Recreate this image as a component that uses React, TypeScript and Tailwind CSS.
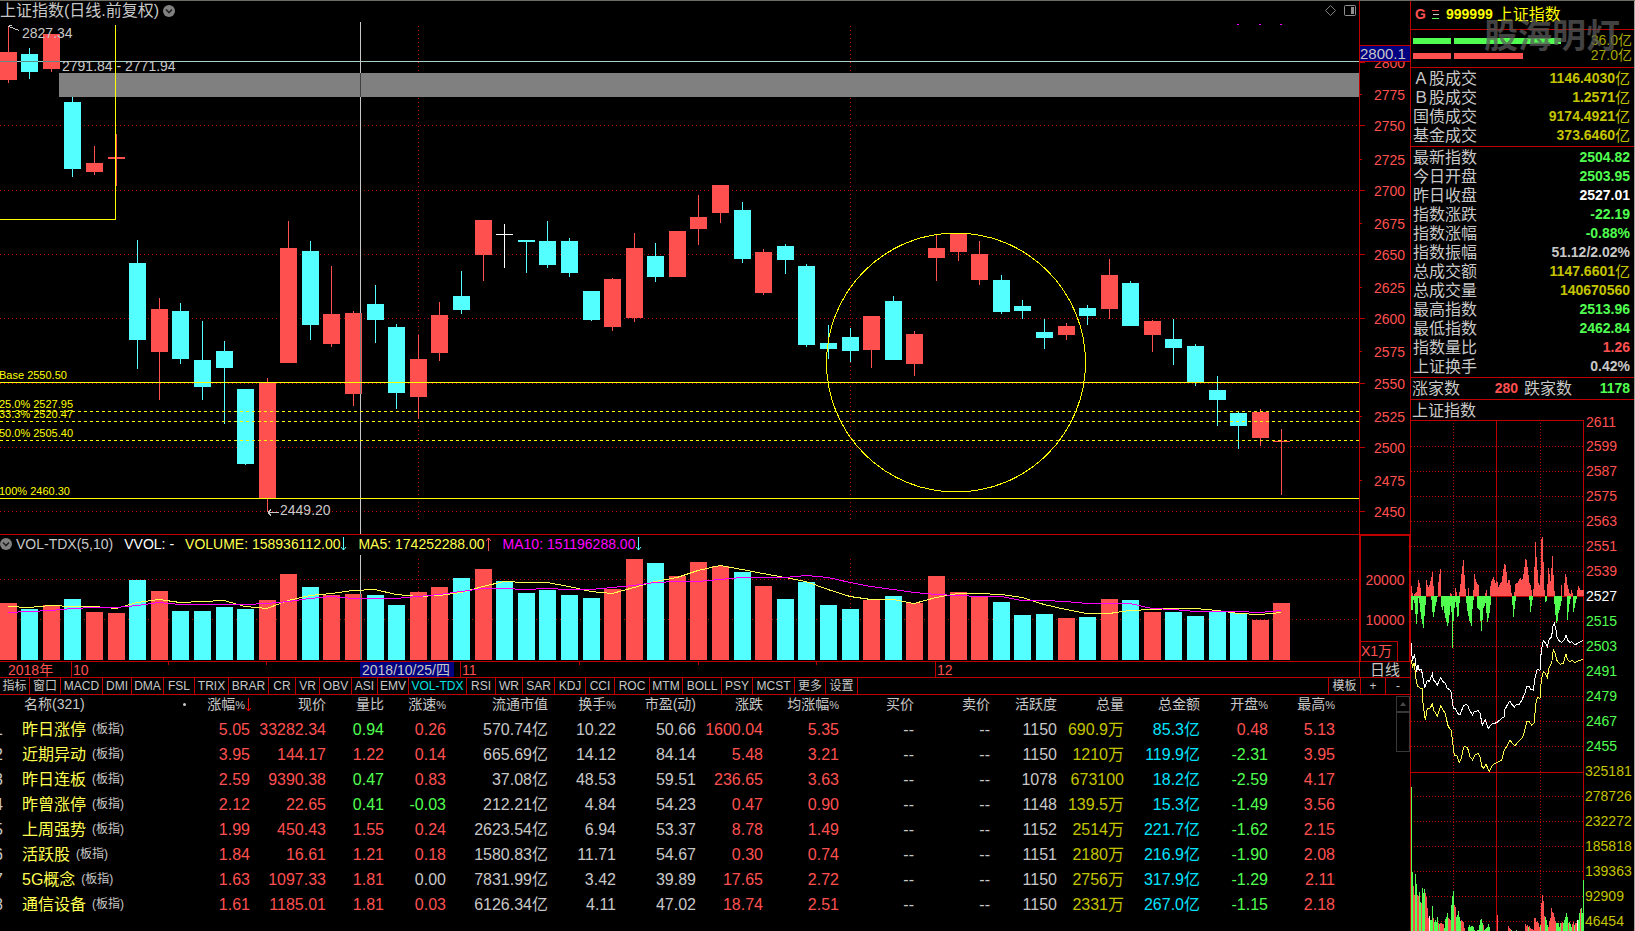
import React from "react";

type Tone = "R" | "C" | "W";
// tone, body top, body bottom, high, low, volume bar top
type Bar = [Tone, number, number, number, number, number];

const bars: Bar[] = [
  ["R", 52, 80, 27, 83, 603], ["C", 54, 72, 48, 79, 609], ["R", 34, 69, 34, 72, 605], ["C", 102, 169, 97, 177, 599],
  ["R", 163, 172, 146, 175, 612], ["R", 157, 159, 134, 186, 613], ["C", 263, 340, 240, 369, 580], ["R", 309, 352, 298, 400, 591],
  ["C", 311, 359, 303, 364, 611], ["C", 360, 387, 321, 400, 611], ["C", 351, 368, 341, 424, 607], ["C", 389, 464, 389, 465, 609],
  ["R", 382, 498, 378, 512, 600], ["R", 248, 363, 221, 363, 574], ["C", 251, 325, 241, 340, 587], ["R", 314, 344, 266, 347, 595],
  ["R", 313, 394, 311, 406, 594], ["C", 304, 320, 285, 343, 595], ["C", 327, 393, 324, 409, 605], ["R", 359, 397, 335, 419, 592],
  ["R", 315, 353, 302, 361, 587], ["C", 296, 310, 271, 314, 578], ["R", 220, 255, 220, 281, 569], ["W", 234, 235, 224, 268, 581],
  ["C", 240, 242, 240, 273, 593], ["C", 241, 265, 221, 268, 590], ["C", 241, 273, 238, 277, 595], ["C", 291, 320, 291, 321, 598],
  ["R", 279, 327, 278, 331, 589], ["R", 248, 318, 233, 322, 559], ["C", 256, 277, 243, 282, 563], ["R", 231, 277, 231, 277, 576],
  ["R", 217, 229, 195, 245, 562], ["R", 185, 213, 185, 223, 566], ["C", 210, 259, 202, 263, 572], ["R", 252, 293, 249, 295, 586],
  ["C", 246, 260, 244, 274, 599], ["C", 266, 345, 264, 347, 582], ["C", 343, 349, 325, 359, 605], ["C", 337, 351, 328, 362, 609],
  ["R", 316, 350, 316, 368, 600], ["C", 301, 360, 296, 360, 596], ["R", 334, 364, 331, 376, 603], ["R", 248, 258, 234, 281, 576],
  ["R", 233, 252, 233, 261, 592], ["R", 254, 280, 241, 285, 596], ["C", 280, 312, 275, 314, 602], ["C", 306, 311, 300, 319, 615],
  ["C", 332, 338, 319, 349, 614], ["R", 326, 335, 323, 340, 618], ["C", 308, 316, 305, 325, 617], ["R", 275, 309, 259, 319, 599],
  ["C", 283, 326, 281, 326, 600], ["R", 321, 335, 320, 352, 612], ["C", 339, 348, 319, 365, 612], ["C", 346, 382, 344, 386, 616],
  ["C", 390, 400, 376, 426, 612], ["C", 413, 426, 412, 449, 613], ["R", 412, 438, 409, 446, 620], ["R", 441, 442, 429, 495, 603],
];
const fills: Record<Tone, string> = { R: "#ff5050", C: "#54ffff", W: "#ffffff" };
const cx = (n: number) => Math.round(7.6 + 21.59 * n);

const ma5 = [606, 607, 605, 606, 606, 608, 602, 599, 602, 601, 600, 606, 608, 600, 595, 593, 590, 589, 594, 596, 595, 592, 586, 581, 582, 582, 586, 591, 593, 587, 581, 577, 570, 565, 569, 573, 577, 581, 589, 596, 599, 599, 603, 597, 593, 593, 594, 597, 604, 609, 613, 613, 610, 609, 608, 608, 610, 613, 614, 612];
const ma10 = [612, 611, 610, 608, 607, 607, 605, 602, 604, 604, 604, 604, 603, 601, 598, 596, 598, 598, 598, 596, 594, 591, 588, 588, 589, 588, 589, 589, 587, 585, 582, 581, 581, 579, 577, 577, 577, 575, 577, 582, 586, 589, 592, 594, 595, 596, 596, 600, 600, 601, 603, 603, 603, 608, 609, 611, 611, 611, 612, 610];
const maPath = (v: number[]) => v.map((y, n) => `${cx(n)},${y + 0.5}`).join(" ");

const priceLabels: [string, number][] = [
  ["2800", 62], ["2775", 94], ["2750", 125], ["2725", 159], ["2700", 190], ["2675", 223], ["2650", 254], ["2625", 287],
  ["2600", 318], ["2575", 351], ["2550", 383], ["2525", 416], ["2500", 447], ["2475", 480], ["2450", 511],
];
const tabs: [string, string][] = [
  ["指标", "w-[30px]"], ["窗口", "w-[31px]"], ["MACD", "w-[42px]"], ["DMI", "w-[29px]"], ["DMA", "w-[32px]"], ["FSL", "w-[31px]"],
  ["TRIX", "w-[34px]"], ["BRAR", "w-[40px]"], ["CR", "w-[27px]"], ["VR", "w-[24px]"], ["OBV", "w-[32px]"], ["ASI", "w-[26px]"],
  ["EMV", "w-[31px]"], ["VOL-TDX", "w-[58px]"], ["RSI", "w-[29px]"], ["WR", "w-[27px]"], ["SAR", "w-[32px]"], ["KDJ", "w-[31px]"],
  ["CCI", "w-[29px]"], ["ROC", "w-[35px]"], ["MTM", "w-[33px]"], ["BOLL", "w-[39px]"], ["PSY", "w-[31px]"], ["MCST", "w-[42px]"],
  ["更多", "w-[31px]"], ["设置", "w-[32px]"],
];

const RED = "text-[#ff5050]";
const GREEN = "text-[#50ff50]";
const GREY = "text-[#c8c8c8]";
const GOLD = "text-[#c4c400]";
const AQUA = "text-[#00e4ff]";

const columns: [string, string][] = [
  ["现价", "w-[76px]"], ["量比", "w-[58px]"], ["涨速%", "w-[62px]"], ["流通市值", "w-[102px]"], ["换手%", "w-[68px]"],
  ["市盈(动)", "w-[80px]"], ["涨跌", "w-[67px]"], ["均涨幅%", "w-[76px]"], ["买价", "w-[75px]"], ["卖价", "w-[76px]"],
  ["活跃度", "w-[67px]"], ["总量", "w-[67px]"], ["总金额", "w-[76px]"], ["开盘%", "w-[68px]"], ["最高%", "w-[67px]"],
];
const rows: string[][] = [
  ["昨日涨停", "5.05", "33282.34", "0.94", "0.26", "570.74亿", "10.22", "50.66", "1600.04", "5.35", "--", "--", "1150", "690.9万", "85.3亿", "0.48", "5.13"],
  ["近期异动", "3.95", "144.17", "1.22", "0.14", "665.69亿", "14.12", "84.14", "5.48", "3.21", "--", "--", "1150", "1210万", "119.9亿", "-2.31", "3.95"],
  ["昨日连板", "2.59", "9390.38", "0.47", "0.83", "37.08亿", "48.53", "59.51", "236.65", "3.63", "--", "--", "1078", "673100", "18.2亿", "-2.59", "4.17"],
  ["昨曾涨停", "2.12", "22.65", "0.41", "-0.03", "212.21亿", "4.84", "54.23", "0.47", "0.90", "--", "--", "1148", "139.5万", "15.3亿", "-1.49", "3.56"],
  ["上周强势", "1.99", "450.43", "1.55", "0.24", "2623.54亿", "6.94", "53.37", "8.78", "1.49", "--", "--", "1152", "2514万", "221.7亿", "-1.62", "2.15"],
  ["活跃股", "1.84", "16.61", "1.21", "0.18", "1580.83亿", "11.71", "54.67", "0.30", "0.74", "--", "--", "1151", "2180万", "216.9亿", "-1.90", "2.08"],
  ["5G概念", "1.63", "1097.33", "1.81", "0.00", "7831.99亿", "3.42", "39.89", "17.65", "2.72", "--", "--", "1150", "2756万", "317.9亿", "-1.29", "2.11"],
  ["通信设备", "1.61", "1185.01", "1.81", "0.03", "6126.34亿", "4.11", "47.02", "18.74", "2.51", "--", "--", "1150", "2331万", "267.0亿", "-1.15", "2.18"],
];
function cellTone(i: number, v: string) {
  if (i === 3) return Number(v) < 1 ? GREEN : RED;
  if (i === 4 || i === 15) return v === "0.00" ? GREY : v.startsWith("-") ? GREEN : RED;
  if ([5, 6, 7, 10, 11, 12].includes(i)) return GREY;
  if (i === 13) return GOLD;
  if (i === 14) return AQUA;
  return RED;
}

const turnover: [string, string][] = [["Ａ股成交", "1146.4030"], ["Ｂ股成交", "1.2571"], ["国债成交", "9174.4921"], ["基金成交", "373.6460"]];
const stats: [string, string, string, string?][] = [
  ["最新指数", "2504.82", GREEN], ["今日开盘", "2503.95", GREEN], ["昨日收盘", "2527.01", "text-white"], ["指数涨跌", "-22.19", GREEN],
  ["指数涨幅", "-0.88%", GREEN], ["指数振幅", "51.12/2.02%", GREY], ["总成交额", "1147.6601", GOLD, "亿"], ["总成交量", "140670560", GOLD],
  ["最高指数", "2513.96", GREEN], ["最低指数", "2462.84", GREEN], ["指数量比", "1.26", RED], ["上证换手", "0.42%", GREY],
];

// Intraday profiles, in thirds of a pixel
const up: [number, number][] = [[34, 10], [38, 0], [44, 2], [50, 4], [55, 16], [60, 11], [64, 0], [76, 0], [78, 18], [84, 8], [90, 13], [97, 24], [102, 0], [112, 0], [116, 18], [121, 27], [124, 0], [149, 0], [152, 5], [155, 0], [163, 0], [166, 8], [172, 0], [176, 0], [180, 8], [185, 26], [190, 36], [195, 11], [198, 0], [202, 0], [205, 8], [208, 0], [219, 0], [223, 22], [228, 14], [235, 11], [238, 0], [253, 0], [259, 6], [262, 0], [268, 0], [270, 9], [275, 16], [280, 19], [286, 13], [291, 16], [295, 9], [300, 12], [305, 15], [312, 32], [317, 31], [322, 13], [327, 18], [332, 9], [335, 0], [342, 0], [345, 12], [352, 13], [360, 18], [366, 15], [372, 26], [377, 40], [382, 29], [388, 13], [393, 9], [396, 0], [399, 0], [401, 13], [406, 54], [410, 34], [415, 13], [420, 9], [424, 57], [428, 60], [432, 8], [436, 0], [440, 0], [442, 12], [446, 33], [450, 11], [457, 40], [460, 21], [464, 0], [481, 0], [484, 11], [487, 0], [490, 0], [493, 13], [497, 25], [502, 11], [507, 4], [510, 0], [515, 8], [518, 0], [530, 0], [534, 11], [540, 6], [550, 6]];
const down: [number, number][] = [[34, 14], [37, 14], [41, 0], [45, 14], [50, 32], [54, 4], [56, 0], [60, 14], [66, 27], [70, 32], [75, 12], [79, 0], [93, 0], [97, 16], [100, 21], [106, 10], [112, 1], [122, 0], [125, 16], [130, 10], [135, 21], [140, 27], [143, 32], [148, 19], [153, 4], [157, 52], [161, 16], [167, 4], [172, 21], [176, 20], [179, 0], [197, 0], [200, 11], [207, 24], [214, 30], [218, 7], [222, 0], [230, 0], [232, 12], [238, 14], [244, 35], [250, 12], [256, 7], [262, 26], [268, 17], [274, 0], [334, 0], [337, 9], [340, 21], [345, 7], [348, 0], [387, 0], [391, 16], [397, 4], [400, 0], [434, 0], [437, 9], [441, 0], [461, 0], [465, 16], [470, 30], [475, 17], [482, 9], [486, 0], [499, 0], [502, 24], [507, 10], [513, 0], [517, 0], [520, 16], [526, 7], [531, 0]];
type Vol = [number, number, string];
const G = "#50ff50", R = "#ff5050", W = "#ffffff";
const vols: Vol[] = [[34, 110, G], [37, 365, G], [40, 408, R], [43, 435, R], [46, 372, G], [49, 402, G], [52, 435, R], [55, 437, R], [58, 425, G], [61, 455, G], [64, 460, R], [67, 413, G], [70, 428, G], [73, 417, G], [76, 430, R], [79, 440, R], [82, 475, R], [85, 505, R], [88, 498, W], [91, 510, G], [94, 510, G], [97, 468, G], [100, 505, R], [103, 515, G], [106, 510, G], [109, 515, G], [112, 500, G], [115, 518, R], [118, 522, G], [121, 520, R], [124, 520, R], [130, 522, R], [133, 535, G], [136, 508, G], [139, 500, G], [142, 490, G], [145, 503, R], [148, 508, R], [151, 510, R], [154, 465, G], [157, 438, G], [160, 423, G], [163, 465, R], [166, 470, R], [169, 502, G], [172, 495, G], [175, 483, G], [178, 500, G], [181, 512, G], [184, 510, R], [190, 515, R], [193, 535, R], [196, 543, G], [202, 543, G], [205, 530, G], [208, 525, G], [211, 530, G], [214, 528, G], [220, 530, G], [224, 543, G], [235, 540, G], [241, 510, G], [244, 507, G], [247, 520, G], [250, 525, R], [253, 540, G], [262, 530, G], [265, 522, G], [268, 530, G], [271, 543, R], [289, 543, R], [292, 495, R], [295, 543, R], [322, 543, R], [325, 527, R], [331, 538, R], [340, 543, G], [350, 540, G], [355, 543, R], [373, 543, R], [376, 522, R], [379, 528, R], [382, 525, R], [385, 530, G], [388, 527, R], [391, 535, R], [400, 540, R], [403, 505, R], [406, 503, R], [409, 515, R], [412, 512, R], [415, 520, R], [418, 530, R], [421, 525, G], [424, 460, R], [427, 435, R], [430, 452, R], [433, 498, R], [436, 500, G], [439, 510, G], [442, 525, G], [445, 530, R], [448, 512, R], [451, 505, R], [454, 473, R], [457, 485, R], [460, 490, R], [463, 500, R], [466, 512, R], [469, 520, G], [475, 520, G], [478, 530, G], [481, 520, G], [487, 515, R], [490, 520, G], [496, 500, G], [499, 488, G], [502, 500, G], [505, 520, R], [508, 516, G], [514, 530, G], [520, 516, R], [523, 525, G], [526, 518, R], [529, 520, R], [532, 510, W], [535, 510, G], [538, 490, G], [541, 478, R], [544, 475, G], [547, 490, G], [550, 390, G]];

function sample(points: [number, number][]) {
  const out: { x: number; h: number }[] = [];
  for (let i = 0; i < 173; i++) {
    const p = 34 + i * 3;
    const k = points.findIndex(([x]) => x >= p);
    if (k < 0) continue;
    const [x1, y1] = points[k];
    const [x0, y0] = k > 0 ? points[k - 1] : points[k];
    const h = x1 === x0 ? y1 : y0 + ((y1 - y0) * (p - x0)) / (x1 - x0);
    if (h >= 1) out.push({ x: i, h: Math.round(h) });
  }
  return out;
}
function sampleVols() {
  const out: { x: number; top: number; c: string }[] = [];
  for (let i = 0; i < 173; i++) {
    const p = 34 + i * 3;
    const k = vols.findIndex(([x]) => x >= p);
    if (k < 0) continue;
    const [x1, y1, c] = vols[k];
    const [x0, y0] = k > 0 ? vols[k - 1] : vols[k];
    const y = x1 === x0 ? y1 : y0 + ((y1 - y0) * (p - x0)) / (x1 - x0);
    if (y < 541) out.push({ x: i, top: Math.round(y / 3), c });
  }
  return out;
}
const white: [number, number][] = [[33, 430], [37, 480], [44, 465], [50, 515], [54, 495], [58, 512], [63, 508], [67, 520], [74, 565], [82, 540], [88, 545], [97, 522], [100, 540], [106, 545], [112, 555], [122, 533], [128, 545], [135, 548], [142, 565], [150, 570], [153, 575], [160, 625], [166, 625], [173, 640], [180, 645], [190, 618], [198, 613], [204, 617], [208, 630], [218, 645], [222, 635], [235, 632], [240, 640], [247, 675], [256, 660], [265, 685], [275, 672], [290, 668], [305, 655], [313, 650], [315, 628], [325, 610], [330, 603], [335, 612], [343, 622], [350, 612], [358, 612], [366, 600], [375, 578], [380, 560], [386, 558], [392, 568], [400, 570], [405, 535], [412, 508], [420, 512], [424, 450], [430, 422], [436, 428], [442, 440], [448, 418], [455, 410], [458, 380], [463, 370], [468, 390], [470, 410], [478, 423], [485, 427], [493, 420], [498, 405], [503, 420], [510, 427], [515, 425], [525, 435], [535, 428], [550, 421]];
const yellow: [number, number][] = [[33, 480], [38, 500], [43, 488], [47, 530], [52, 558], [62, 565], [66, 565], [70, 620], [76, 660], [82, 625], [90, 625], [97, 612], [102, 632], [112, 648], [122, 618], [128, 628], [135, 640], [145, 680], [153, 690], [160, 740], [163, 765], [170, 765], [178, 788], [184, 775], [190, 745], [195, 738], [203, 745], [210, 770], [218, 780], [225, 765], [235, 760], [240, 770], [246, 800], [252, 805], [258, 793], [268, 815], [278, 795], [292, 787], [305, 780], [313, 750], [320, 740], [330, 720], [337, 730], [345, 738], [352, 728], [366, 715], [372, 700], [380, 665], [388, 665], [395, 675], [402, 670], [408, 610], [412, 593], [420, 595], [424, 540], [430, 515], [436, 520], [442, 532], [448, 500], [455, 490], [460, 448], [466, 460], [470, 480], [480, 493], [490, 490], [498, 462], [503, 480], [510, 485], [516, 480], [525, 488], [535, 483], [550, 478]];
const intraday = (pts: [number, number][]) => pts.map(([x, y]) => `${((x - 33) / 3).toFixed(1)},${(y / 3 + 80).toFixed(1)}`).join(" ");

const miniLabels: [string, string][] = [
  ["2611", R], ["2599", R], ["2587", R], ["2575", R], ["2563", R], ["2551", R], ["2539", R], ["2527", W], ["2515", G], ["2503", G],
  ["2491", G], ["2479", G], ["2467", G], ["2455", G], ["325181", "#c4c400"], ["278726", "#c4c400"], ["232272", "#c4c400"],
  ["185818", "#c4c400"], ["139363", "#c4c400"], ["92909", "#c4c400"], ["46454", "#c4c400"],
];

function Collapse({ label }: { label: string }) {
  return (
    <button type="button" aria-label={label} className="shrink-0">
      <svg width="12" height="12" viewBox="0 0 12 12" className="block">
        <circle cx="6" cy="6" r="6" fill="#808080" />
        <path d="M3 4.5 6 7.5 9 4.5" fill="none" stroke="#202020" strokeWidth="1.6" />
      </svg>
    </button>
  );
}

function Arrow({ dir, color }: { dir: "up" | "down"; color: string }) {
  return (
    <svg width="7" height="14" viewBox="0 0 7 14" className="shrink-0" fill="none" stroke={color}>
      {dir === "up" ? <path d="M3.5 14V1M1 4 3.5 1 6 4" /> : <path d="M3.5 0V13M1 10 3.5 13 6 10" />}
    </svg>
  );
}

function GridLine({ y }: { y: number }) {
  return <line x1="0" x2="100%" y1={y + 0.5} y2={y + 0.5} stroke="#c00000" strokeDasharray="1 3" />;
}

function PriceChart() {
  return (
    <svg className="block h-[512px] w-full" shapeRendering="crispEdges" role="img" aria-label="日线">
      <svg y="-22" width="100%" height="534" overflow="visible">
        {[61, 125, 190, 254, 318, 383, 447, 511].map((y) => <GridLine key={y} y={y} />)}
        {[418, 850].map((x) => <line key={x} x1={x + 0.5} x2={x + 0.5} y1="26" y2="520" stroke="#c00000" strokeDasharray="1 3" />)}
        <g fill="#c8c8c8" fontSize="14">
          <path d="M8.500 33V27.500M12 25.500H9M8.500 26.500 19.500 30.500" fill="none" stroke="#c8c8c8" />
          <path d="M268 512.500H279M268 512.500 271 509.500M268 512.500 271 515.500" fill="none" stroke="#c8c8c8" />
          <text x="280" y="515">2449.20</text>
        </g>
        {bars.map(([t, top, bottom, high, low], n) => (
          <g key={n} fill={fills[t]}>
            <rect x={cx(n)} y={high} width="1" height={low - high} />
            <rect x={cx(n) - 8} y={top} width="17" height={bottom - top} />
          </g>
        ))}
        <rect x="59" y="73" width="100%" height="24" fill="#808080" />
        <line x1="0" x2="100%" y1="61.500" y2="61.500" stroke="#a8d0c8" />
        <path d="M0 61.500H17M21 61.500H38M43 61.500H60" stroke="#608c88" />
        <line x1="360.500" x2="360.500" y1="22" y2="534" stroke="#c8c8c8" />
        <line x1="360.500" x2="360.500" y1="73" y2="97" stroke="#404040" />
        <line x1="360.500" x2="360.500" y1="313" y2="394" stroke="#808080" />
        <g fill="none" stroke="#ffff00">
          <path d="M115.500 25V219.500H0" />
          <circle cx="956" cy="362.500" r="129.500" />
          <line x1="0" x2="100%" y1="382.500" y2="382.500" />
          <line x1="0" x2="100%" y1="498.500" y2="498.500" />
          {[411, 421, 440].map((y) => <line key={y} x1="0" x2="100%" y1={y + 0.5} y2={y + 0.5} strokeDasharray="3 3" />)}
        </g>
        <g fill="#c8c8c8" fontSize="14">
          <text x="22" y="38">2827.34</text>
          <text x="62" y="71">2791.84 - 2771.94</text>
        </g>
        <g fill="#ffff00" fontSize="11">
          <text x="-1" y="379">Base 2550.50</text>
          <text x="-1" y="408">25.0% 2527.95</text>
          <text x="-1" y="418">33.3% 2520.47</text>
          <text x="-1" y="437">50.0% 2505.40</text>
          <text x="-1" y="495">100% 2460.30</text>
        </g>
        <path d="M1237 24.500H1239M1259 24.500H1261M1280 24.500H1282" stroke="#ff00ff" />
      </svg>
    </svg>
  );
}

function PriceAxis() {
  return (
    <svg className="block h-[533px] w-[51px] shrink-0 border-l border-[#c00000]" shapeRendering="crispEdges">
      <svg y="-1" width="50" height="534" overflow="visible">
        {priceLabels.map(([l, y], i) => (
          <g key={l}>
            <line x1="0" x2={i % 2 ? 2 : 5} y1={y + 0.5} y2={y + 0.5} stroke="#c00000" />
            <text x="14" y={y + 6} fontSize="14" fill="#ff5050">{l}</text>
          </g>
        ))}
        <rect x="0" y="46" width="50" height="15" fill="#000080" />
        <path d="M0 45.500H50M0 61.500H50" stroke="#c00000" />
        <text x="0" y="59" fontSize="15" fill="#c8c8c8">2800.1</text>
      </svg>
    </svg>
  );
}

function VolumeChart() {
  return (
    <svg className="block h-[106px] w-full" shapeRendering="crispEdges" role="img" aria-label="VOL">
      <svg y="-555" width="100%" height="661" overflow="visible">
        <GridLine y={579} />
        <GridLine y={619} />
        {[418, 850].map((x) => <line key={x} x1={x + 0.5} x2={x + 0.5} y1="559" y2="660" stroke="#c00000" strokeDasharray="1 3" />)}
        {bars.map(([t, , , , , v], n) => (
          <rect key={n} x={cx(n) - 8} y={v} width="17" height={660 - v} fill={t === "R" ? fills.R : fills.C} />
        ))}
        <line x1="360.500" x2="360.500" y1="555" y2="594" stroke="#c8c8c8" />
        <line x1="360.500" x2="360.500" y1="594" y2="660" stroke="#608c88" />
        <polyline points={maPath(ma5)} fill="none" stroke="#ffff50" />
        <polyline points={maPath(ma10)} fill="none" stroke="#ff00ff" />
      </svg>
    </svg>
  );
}

function DateAxis() {
  return (
    <svg className="block h-[15px] w-full min-w-0 flex-1" shapeRendering="crispEdges" fontSize="14" fill="#ff5050">
      <path d="M71.500 0V15M168.500 0V3M266.500 0V3M460.500 0V15M579.500 0V3M698.500 0V3M816.500 0V3M935.500 0V15" stroke="#c00000" />
      <text x="8" y="13">2018年</text>
      <text x="73" y="13">10</text>
      <text x="462" y="13">11</text>
      <text x="937" y="13">12</text>
      <rect x="360" y="0" width="94" height="15" fill="#000080" />
      <text x="362" y="13" fill="#c8c8c8">2018/10/25/四</text>
    </svg>
  );
}

function MiniChart() {
  const dotted = [26, 51, 76, 101, 126, 151, 201, 226, 251, 276, 301, 326, 376, 401, 426, 451, 476, 501];
  return (
    <svg className="block h-[511px] w-full overflow-visible" shapeRendering="crispEdges" role="img" aria-label="分时">
      <g stroke="#c00000">
        {dotted.map((y) => <line key={y} x1="0" x2="172" y1={y + 0.5} y2={y + 0.5} strokeDasharray="1 2" />)}
        <path d="M42.500 0V511M129.500 0V511" strokeDasharray="1 2" />
        <path d="M0 .5H172.500V511M85.500 0V511M0 352.500H172M0 176.500H172" fill="none" />
      </g>
      {sample(up).map(({ x, h }) => <rect key={`u${x}`} x={x} y={176 - h} width="1" height={h} fill={R} />)}
      {sample(down).map(({ x, h }) => <rect key={`d${x}`} x={x} y={176} width="1" height={h} fill={G} />)}
      {sampleVols().map(({ x, top, c }) => <rect key={`v${x}`} x={x} y={330 + top} width="1" height={181 - top} fill={c} />)}
      <polyline points={intraday(white)} fill="none" stroke="#ffffff" />
      <polyline points={intraday(yellow)} fill="none" stroke="#ffff50" />
      {miniLabels.map(([l, c], i) => (
        <text key={l} x={i > 13 ? 174 : 175} y={i * 25 + (i === 0 ? 7 : 6)} fontSize="14" fill={c}>{l}</text>
      ))}
    </svg>
  );
}

function Board() {
  return (
    <table className="w-full table-fixed border-collapse text-right text-[16px] leading-[25px]">
      <colgroup>
        <col className="w-[4px]" />
        <col className="w-[190px]" />
        <col className="w-[56px]" />
        {columns.map(([c, w]) => <col key={c} className={w} />)}
        <col />
      </colgroup>
      <thead>
        <tr className="h-[22px] whitespace-nowrap align-top text-[14px] leading-[18px] text-[#c8c8c8]">
          <td className="p-0" />
          <th scope="col" className="p-0 pl-5 pr-2 font-normal">
            <span className="flex items-center justify-between"><span>名称(321)</span><span className="size-[3px] rounded-full bg-[#c8c8c8]" /></span>
          </th>
          <th scope="col" className="p-0 font-normal">
            <span className="-mr-0.5 flex items-center justify-end">
              <span>涨幅<span className="text-[11px]">%</span></span><Arrow dir="down" color="#ff0000" />
            </span>
          </th>
          {columns.map(([c]) => (
            <th key={c} scope="col" className="p-0 font-normal">
              {c.endsWith("%") ? <>{c.slice(0, -1)}<span className="text-[11px]">%</span></> : c}
            </th>
          ))}
          <td className="p-0" />
        </tr>
      </thead>
      <tbody>
        {rows.map((r, n) => (
          <tr key={r[0]} className="h-[25px] whitespace-nowrap">
            <td className="p-0 text-[#c8c8c8]"><span className="flex w-[3px] justify-end overflow-hidden">{n + 1}</span></td>
            <th scope="row" className="p-0 pl-[18px] text-left font-normal text-[#ffff50]">
              <span className="flex items-center gap-1.5"><span>{r[0]}</span><span className="text-[12px] text-[#c8c8c8]">(板指)</span></span>
            </th>
            {r.slice(1).map((v, i) => <td key={i} className={`p-0 ${cellTone(i + 1, v)}`}>{v}</td>)}
            <td className="p-0" />
          </tr>
        ))}
      </tbody>
    </table>
  );
}

export default function App() {
  return (
    <div className="flex min-h-screen border-t border-[#6c6c60] bg-black font-['Liberation_Sans','Noto_Sans_CJK_SC',sans-serif] text-[#c8c8c8]">
      <main className="flex min-w-0 flex-1 flex-col">
        <section className="flex">
          <div className="min-w-0 flex-1">
            <header className="flex h-[21px] items-center gap-1 whitespace-nowrap pb-0.5">
              <h1 className="text-[16px] leading-[19px]">上证指数(日线.前复权)</h1>
              <Collapse label="日线菜单" />
              <div className="ml-auto flex items-center gap-2 pr-[3px]">
                <button type="button" aria-label="标记">
                  <svg width="11" height="11" viewBox="0 0 11 11" className="block"><path d="M5.500.5 10.500 5.500 5.500 10.500.5 5.500Z" fill="none" stroke="#808080" /></svg>
                </button>
                <button type="button" aria-label="侧栏">
                  <svg width="12" height="11" viewBox="0 0 12 11" className="block"><rect x=".5" y=".5" width="11" height="10" rx="1" fill="none" stroke="#909090" /><rect x="7" y="2" width="3" height="7" fill="#909090" /></svg>
                </button>
              </div>
            </header>
            <PriceChart />
          </div>
          <PriceAxis />
        </section>

        <section className="flex border-t border-[#c00000]">
          <div className="min-w-0 flex-1">
            <header className="flex h-5 items-center gap-[11px] whitespace-nowrap pb-0.5 text-[14px] leading-[18px]">
              <div className="flex items-center gap-1"><Collapse label="指标菜单" /><h2>VOL-TDX(5,10)</h2></div>
              <span className="text-white">VVOL: -</span>
              <span className="flex items-center text-[#ffff50]">VOLUME: 158936112.00<Arrow dir="down" color="#54ffff" /></span>
              <span className="flex items-center text-[#ffff50]">MA5: 174252288.00<Arrow dir="up" color="#ff5050" /></span>
              <span className="flex items-center text-[#ff00ff]">MA10: 151196288.00<Arrow dir="down" color="#54ffff" /></span>
            </header>
            <VolumeChart />
          </div>
          <div className="flex w-[51px] shrink-0 flex-col border-l-2 border-r border-t border-[#c00000] text-[14px] leading-[16px] text-[#ff5050]">
            <div className="flex flex-1 flex-col items-center gap-6 pt-9">
              <span>20000</span>
              <span>10000</span>
            </div>
            <div className="h-5 w-[37px] border-r border-t border-[#c00000] leading-[18px]">X1万</div>
          </div>
        </section>

        <section className="flex h-4 border-t border-[#c00000]">
          <DateAxis />
          <button type="button" className="w-[51px] shrink-0 border-l border-[#c00000] text-center text-[15px] leading-[15px]">日线</button>
        </section>

        <nav aria-label="指标" className="flex h-[18px] overflow-hidden whitespace-nowrap border-y border-[#c00000] text-[12px] leading-[16px]">
          {tabs.map(([t, w]) => (
            <button key={t} type="button" className={`${w} shrink-0 border-r border-[#c00000] text-center ${t === "VOL-TDX" ? "text-[#00e4e4]" : ""}`}>{t}</button>
          ))}
          <div className="ml-auto flex">
            <button type="button" className="w-8 border-l border-[#c00000] text-center">模板</button>
            <button type="button" className="w-[25px] border-l border-[#c00000] text-center">+</button>
            <button type="button" className="w-[25px] border-l border-[#c00000] text-center">-</button>
          </div>
        </nav>

        <section className="flex flex-1">
          <div className="min-w-0 flex-1 overflow-hidden"><Board /></div>
          <div className="mt-px w-[14px] shrink-0">
            <button type="button" aria-label="向上滚动" className="flex h-4 w-full items-center justify-center border border-[#383838]">
              <svg width="6" height="4" viewBox="0 0 6 4"><path d="M3 0 6 4H0Z" fill="#484848" /></svg>
            </button>
            <div className="h-10 border border-[#383838]" />
          </div>
        </section>
      </main>

      <aside className="w-[225px] shrink-0 border-l border-r border-l-[#c00000] border-r-[#a0a0a0] text-[16px] leading-[19px]">
        <div className="relative">
          <div className="flex h-[29px] items-center border-b border-[#c00000] pb-px pl-1">
            <span className="w-[17px] text-[14px] font-bold text-[#ff5050]">G</span>
            <svg width="7" height="10" viewBox="0 0 7 10"><path d="M0 .5H7" stroke="#ff5050" /><path d="M1 4.500H7" stroke="#c8c8c8" /><path d="M0 8.500H7" stroke="#50ff50" /></svg>
            <span className="ml-[7px] text-[14px] font-bold text-[#ffff00]">999999</span>
            <span className="ml-1 text-[#ffff00]">上证指数</span>
          </div>
          <div className="h-[38px] border-b border-[#c00000] pl-0.5 pr-0.5 pt-[3px] text-[14px] leading-[15px] text-[#a8a800]">
            <div className="flex h-[15px] items-center justify-between">
              <span className="flex gap-[3px]"><i className="h-1.5 w-[38px] bg-[#50ff50]" /><i className="h-1.5 w-[107px] bg-[#50ff50]" /></span>
              <span>36.0亿</span>
            </div>
            <div className="flex h-[15px] items-center justify-between">
              <span className="flex gap-[3px]"><i className="h-1.5 w-[38px] bg-[#ff5050]" /><i className="h-1.5 w-[69px] bg-[#ff5050]" /></span>
              <span>27.0亿</span>
            </div>
          </div>
          <div className="pointer-events-none absolute left-[73px] top-[15px] whitespace-nowrap text-[34px] font-bold leading-[40px] text-[#585858]/75">股海明灯</div>
        </div>
        <dl className="border-b border-[#c00000] py-px pl-0.5 pr-1">
          {turnover.map(([k, v]) => (
            <div key={k} className="flex items-center justify-between">
              <dt>{k}</dt>
              <dd className="flex items-center text-[14px] font-bold text-[#c4c400]">{v}<span className="text-[15px] font-normal">亿</span></dd>
            </div>
          ))}
        </dl>
        <dl className="border-b border-[#c00000] py-px pl-0.5 pr-1">
          {stats.map(([k, v, c, unit]) => (
            <div key={k} className="flex items-center justify-between">
              <dt>{k}</dt>
              <dd className={`flex items-center text-[14px] font-bold ${c}`}>{v}{unit && <span className="text-[15px] font-normal">{unit}</span>}</dd>
            </div>
          ))}
        </dl>
        <dl className="flex h-[22px] items-center border-b border-[#c00000] pl-px pr-1">
          <dt>涨家数</dt>
          <dd className="flex-1 text-right text-[14px] font-bold text-[#ff5050]">280</dd>
          <dt className="ml-1.5">跌家数</dt>
          <dd className="flex-1 text-right text-[14px] font-bold text-[#50ff50]">1178</dd>
        </dl>
        <h2 className="h-5 pl-px leading-[21px]">上证指数</h2>
        <MiniChart />
      </aside>
    </div>
  );
}
